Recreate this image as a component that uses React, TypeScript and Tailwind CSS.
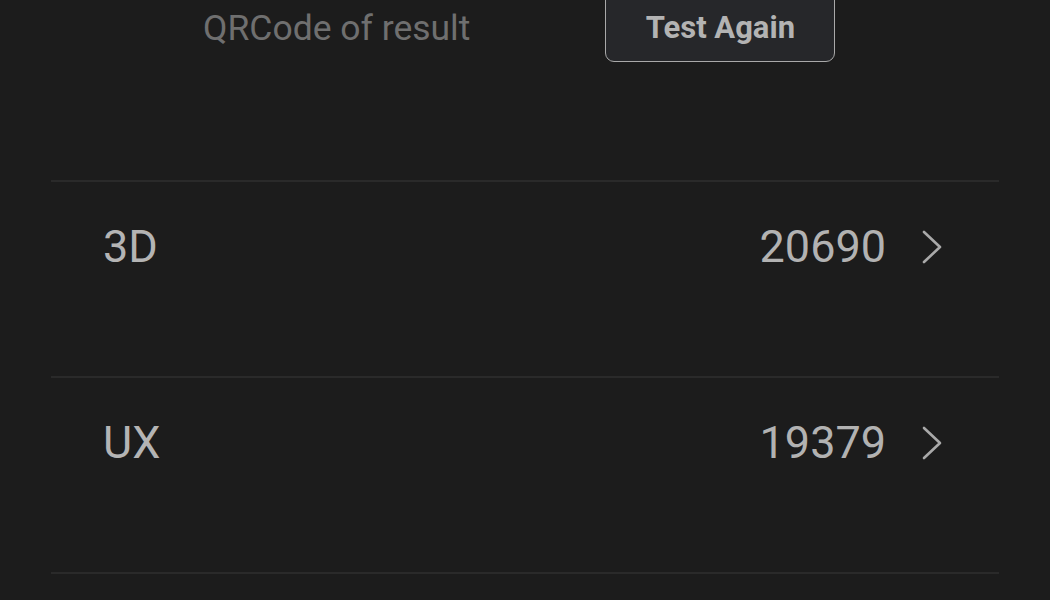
const rows = [
  { name: "3D", score: "20690" },
  { name: "UX", score: "19379" },
];

function Chevron() {
  return (
    <svg width="22" height="34" viewBox="0 0 22 34" fill="none" className="text-[#a9a9a9]">
      <path d="M3 2 L19 17 L3 32" stroke="currentColor" strokeWidth="2.6" strokeLinecap="round" strokeLinejoin="round" />
    </svg>
  );
}

const ScoreRow = ({ name, score }: { name: string; score: string }) => {
  return (
    <div className="flex h-[194px] items-start pt-[40px] pl-[52px] pr-[56px]">
      <div className="flex h-[50px] w-full items-center">
        <span className="text-[45px] text-[#b4b4b4]">{name}</span>
        <span className="ml-auto text-[45px] text-[#b2b2b2]">{score}</span>
        <span className="ml-[35px] flex items-center">
          <Chevron />
        </span>
      </div>
    </div>
  );
};

export default function App() {
  return (
    <div
      className="h-[600px] w-[1050px] overflow-hidden bg-[#1c1c1c]"
      style={{ fontFamily: "Roboto, 'Noto Sans', sans-serif" }}
    >
      <div className="flex h-[180px] items-start pl-[203px]">
        <div className="flex h-[57px] items-center text-[35.5px] text-[#6f6f6f]">QRCode of result</div>
        <button className="-mt-[10px] ml-[135px] flex h-[72px] w-[230px] items-center justify-center rounded-[9px] border border-[#a9a9a9] bg-[#26272a] pt-[4px] text-[31px] font-bold text-[#b3b3b3]">
          Test Again
        </button>
      </div>
      <div className="mx-[51px]">
        {rows.map((row) => (
          <div key={row.name}>
            <div className="h-[2px] bg-[#2a2a2a]" />
            <ScoreRow {...row} />
          </div>
        ))}
        <div className="h-[2px] bg-[#2a2a2a]" />
      </div>
    </div>
  );
}
